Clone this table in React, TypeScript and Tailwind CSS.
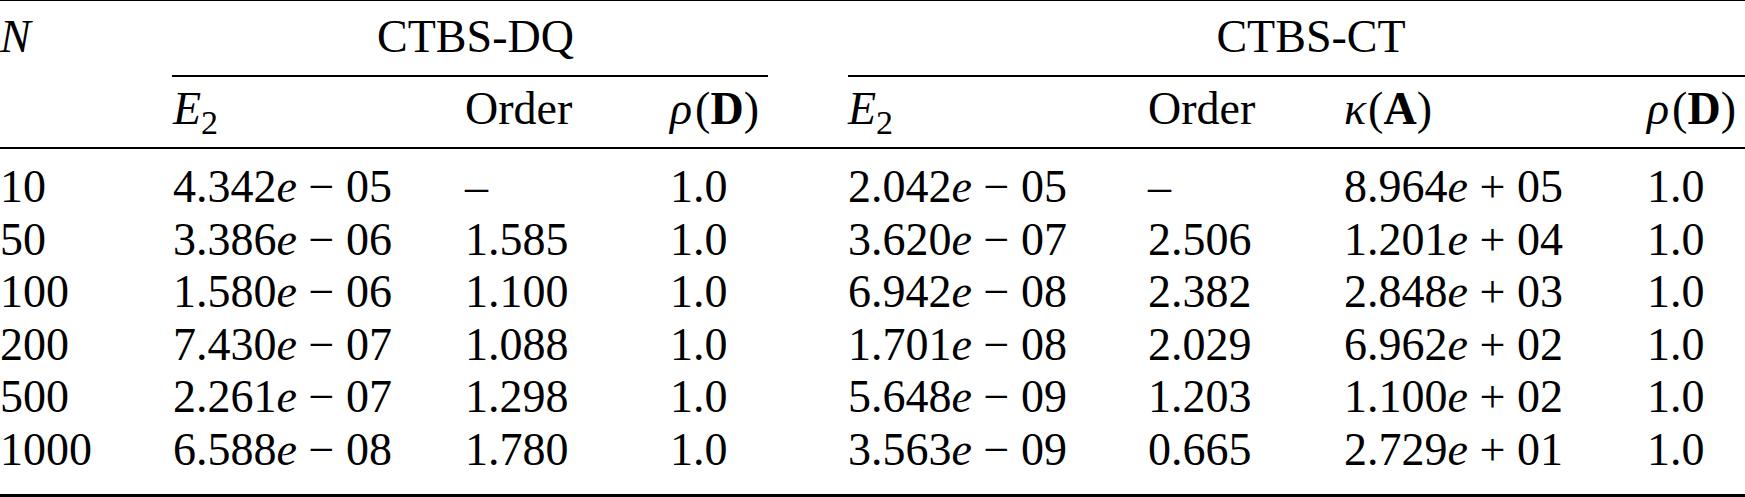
const cols = 'grid grid-cols-[173px_292px_205px_178px_300px_196px_303px_98px]';

type Sci = [string, string, string];

const rows: { n: string; dqE: Sci; dqOrd: string; ctE: Sci; ctOrd: string; kappa: Sci }[] = [
  { n: '10', dqE: ['4.342', '−', '05'], dqOrd: '–', ctE: ['2.042', '−', '05'], ctOrd: '–', kappa: ['8.964', '+', '05'] },
  { n: '50', dqE: ['3.386', '−', '06'], dqOrd: '1.585', ctE: ['3.620', '−', '07'], ctOrd: '2.506', kappa: ['1.201', '+', '04'] },
  { n: '100', dqE: ['1.580', '−', '06'], dqOrd: '1.100', ctE: ['6.942', '−', '08'], ctOrd: '2.382', kappa: ['2.848', '+', '03'] },
  { n: '200', dqE: ['7.430', '−', '07'], dqOrd: '1.088', ctE: ['1.701', '−', '08'], ctOrd: '2.029', kappa: ['6.962', '+', '02'] },
  { n: '500', dqE: ['2.261', '−', '07'], dqOrd: '1.298', ctE: ['5.648', '−', '09'], ctOrd: '1.203', kappa: ['1.100', '+', '02'] },
  { n: '1000', dqE: ['6.588', '−', '08'], dqOrd: '1.780', ctE: ['3.563', '−', '09'], ctOrd: '0.665', kappa: ['2.729', '+', '01'] },
];

function SciNum({ v }: { v: Sci }) {
  return (
    <span className="whitespace-nowrap">
      {v[0]}
      <span className="italic">e</span>
      {' '}
      {v[1]}
      {' '}
      {v[2]}
    </span>
  );
}

function E2() {
  return (
    <span className="whitespace-nowrap">
      <span className="italic">E</span>
      <span className="relative top-[10px] text-[34px] leading-none">2</span>
    </span>
  );
}

function Rho() {
  return (
    <span className="whitespace-nowrap">
      <span className="italic">ρ</span>
      <span className="ml-[3px]">(</span>
      <span className="font-bold">D</span>)
    </span>
  );
}

function Kappa() {
  return (
    <span className="whitespace-nowrap">
      <span className="italic">κ</span>
      <span className="ml-[2px]">(</span>
      <span className="font-bold">A</span>)
    </span>
  );
}

export default function App() {
  return (
    <div className="w-[1745px] h-[497px] overflow-hidden bg-white text-black font-['Liberation_Serif',serif] text-[46px] leading-[53px]">
      <div className="border-t border-black" />

      {/* group headings */}
      <div className={`${cols} pt-[9px]`}>
        <div className="italic">N</div>
        <div className="col-span-3 -ml-px mr-[80px] pb-[12px] pl-[11px] border-b-2 border-black text-center">CTBS-DQ</div>
        <div className="col-span-4 pb-[12px] pl-[29px] border-b-2 border-black text-center">CTBS-CT</div>
      </div>

      {/* column headings */}
      <div className={`${cols} h-[72px] pt-[5px] border-b-2 border-black overflow-hidden`}>
        <div />
        <div><E2 /></div>
        <div>Order</div>
        <div><Rho /></div>
        <div><E2 /></div>
        <div>Order</div>
        <div><Kappa /></div>
        <div><Rho /></div>
      </div>

      <div className="pt-[11px] pb-[19px] border-b-[3px] border-black">
        {rows.map((r) => (
          <div key={r.n} className={`${cols} h-[52.5px] whitespace-nowrap`}>
            <div>{r.n}</div>
            <div><SciNum v={r.dqE} /></div>
            <div>{r.dqOrd}</div>
            <div>1.0</div>
            <div><SciNum v={r.ctE} /></div>
            <div>{r.ctOrd}</div>
            <div><SciNum v={r.kappa} /></div>
            <div>1.0</div>
          </div>
        ))}
      </div>
    </div>
  );
}
